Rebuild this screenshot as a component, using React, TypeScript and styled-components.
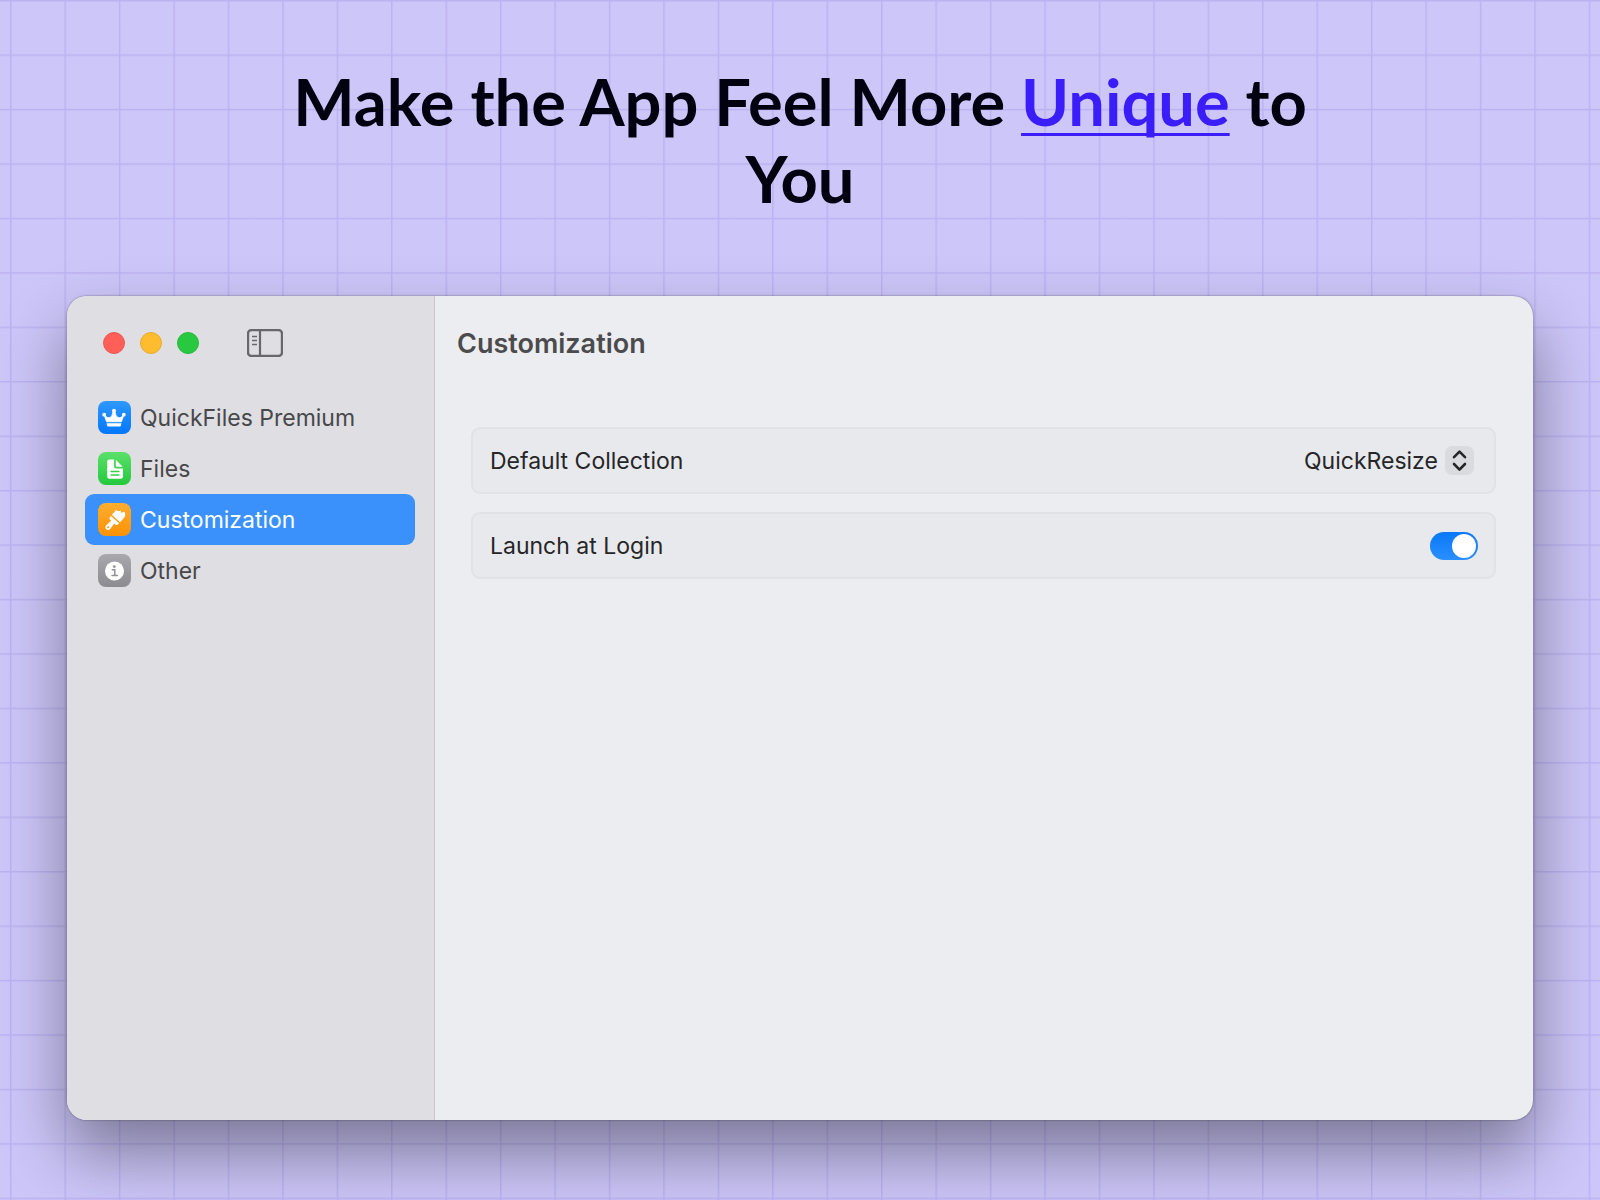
import React, { useState } from "react";
import styled, { createGlobalStyle, css } from "styled-components";

const GlobalStyle = createGlobalStyle`
  *, *::before, *::after { box-sizing: border-box; }
  body {
    margin: 0;
    font-family: Inter, "Liberation Sans", sans-serif;
  }
`;

const Page = styled.main`
  --cell: calc(100vw * 49 / 1440);
  display: flex;
  flex-direction: column;
  min-height: 100vh;
  padding: 63px 67px 80px;
  background-color: #cdc6f9;
  background-image:
    linear-gradient(to right, #bcb2f2 1px, transparent 2px),
    linear-gradient(to bottom, #bcb2f2 1px, transparent 2px);
  background-size: var(--cell) var(--cell);
  background-position: 10px 0;
`;

const Headline = styled.h1`
  width: 100%;
  max-width: 1100px;
  margin: 0 auto 79px;
  font-family: Lato, "Open Sans", sans-serif;
  font-size: 65px;
  font-weight: 700;
  line-height: 77px;
  text-align: center;
  color: #02010f;
`;

const Accent = styled.span`
  color: #3a1df9;
  text-decoration: underline;
  text-decoration-thickness: 3px;
  text-decoration-skip-ink: none;
  text-underline-offset: 7px;
`;

const Window = styled.section`
  display: flex;
  flex: 1;
  overflow: hidden;
  border-radius: 20px;
  background: #ecedf1;
  box-shadow:
    0 0 2px rgba(0, 0, 0, 0.5),
    0 33px 66px rgba(0, 0, 0, 0.4);
`;

const Sidebar = styled.aside`
  flex: none;
  width: 368px;
  padding: 0 19px 0 18px;
  border-right: 1px solid #c8c8cb;
  background: #dfdee3;
`;

const Toolbar = styled.div`
  display: flex;
  align-items: center;
  height: 94px;
  padding-left: 18px;
`;

const Lights = styled.div`
  display: flex;
  gap: 15px;
  margin-right: 48px;
`;

const Light = styled.button<{ $color: string; $edge: string }>`
  width: 22px;
  height: 22px;
  padding: 0;
  border: 1px solid ${(p) => p.$edge};
  border-radius: 50%;
  background: ${(p) => p.$color};
`;

const IconButton = styled.button`
  display: flex;
  padding: 0;
  border: 0;
  background: none;
  color: #68686b;
`;

const Nav = styled.nav`
  display: flex;
  flex-direction: column;
  padding-top: 2px;
`;

const NavItem = styled.a<{ $active: boolean }>`
  display: flex;
  align-items: center;
  gap: 9px;
  height: 51px;
  padding-left: 13px;
  border-radius: 9px;
  font-size: 23px;
  font-weight: 425;
  color: #48484a;
  text-decoration: none;
  ${(p) =>
    p.$active &&
    css`
      background: #3a91fc;
      color: #fff;
    `}
`;

const Tile = styled.span<{ $from: string; $to: string }>`
  display: grid;
  place-items: center;
  width: 33px;
  height: 33px;
  border-radius: 8px;
  background: linear-gradient(${(p) => p.$from}, ${(p) => p.$to});
`;

const Content = styled.div`
  flex: 1;
  min-width: 0;
`;

const Title = styled.h2`
  display: flex;
  align-items: center;
  height: 94px;
  margin: 0;
  padding-left: 22px;
  font-size: 27px;
  font-weight: 600;
  color: #4b4b4d;
`;

const Settings = styled.form`
  display: flex;
  flex-direction: column;
  gap: 18px;
  padding: 37px 37px 37px 36px;
`;

const Card = styled.div`
  display: flex;
  align-items: center;
  justify-content: space-between;
  height: 67px;
  padding: 0 16px 0 17px;
  border: 2px solid #e1e2e5;
  border-radius: 9px;
  background: #e8e9ec;
  font-size: 23px;
  font-weight: 425;
  color: #262628;
`;

const Picker = styled.div`
  position: relative;
  display: flex;
  align-items: center;
  margin-right: 4px;
`;

const Select = styled.select`
  appearance: none;
  height: 33px;
  padding: 0 36px 0 0;
  border: 0;
  background: none;
  font: inherit;
  color: inherit;
`;

const Stepper = styled.span`
  position: absolute;
  right: 0;
  display: grid;
  place-items: center;
  width: 29px;
  height: 29px;
  border-radius: 7px;
  background: #dadbde;
  pointer-events: none;
`;

const Switch = styled.input`
  appearance: none;
  display: flex;
  width: 48px;
  height: 28px;
  margin: 0;
  padding: 2px;
  border-radius: 14px;
  background: #c4c4c8;

  &::before {
    content: "";
    width: 24px;
    height: 24px;
    border-radius: 50%;
    background: #fff;
  }

  &:checked {
    justify-content: flex-end;
    background: linear-gradient(#0a78f8, #2a8fff);
  }
`;

const SidebarIcon = () => (
  <svg width="36" height="28" viewBox="0 0 36 28" fill="none" stroke="currentColor">
    <rect x="1" y="1" width="34" height="26" rx="3.5" strokeWidth="2.4" />
    <path d="M13 1v26" strokeWidth="2.2" />
    <path d="M5 7.5h5M5 11.5h5M5 15.5h5" strokeWidth="1.5" />
  </svg>
);

const CrownIcon = () => (
  <svg width="33" height="33" viewBox="0 0 33 33" fill="#fff">
    <path
      d="M6 13.8q3.800 4 6 2.800t3.200-6.400h1.600q1 5.200 3.200 6.400t6-2.800l-2.600 7H8.600z"
      stroke="#fff"
      strokeWidth="0.8"
      strokeLinejoin="round"
    />
    <circle cx="6.2" cy="13.7" r="1.900" />
    <circle cx="25.800" cy="13.7" r="1.900" />
    <circle cx="16" cy="9.700" r="2" />
    <path d="M8.600 22.200h14.800l-.4 2.200q-.2 1.100-1.300 1.100H10.300q-1.100 0-1.300-1.100z" />
  </svg>
);

const FileIcon = () => (
  <svg width="33" height="33" viewBox="0 0 33 33">
    <path d="M11.500 7.500H16v6.800q0 2.200 2.200 2.200H25v8q0 2.300-2.300 2.300h-11.200q-2.300 0-2.300-2.300V9.800q0-2.300 2.300-2.300z" fill="#fff" />
    <path d="M17.800 7.800v5.800q0 1.200 1.200 1.200h5.700z" fill="#fff" />
    <path d="M13 19.500h8M13 23h8" stroke="#35cf4b" strokeWidth="1.300" strokeLinecap="round" />
  </svg>
);

const BrushIcon = () => (
  <svg width="33" height="33" viewBox="0 0 33 33">
    <g transform="translate(-0.200 0.900) rotate(42 16.500 16.500)" fill="#fff">
      <path d="M11 14V7.200q2.600 1 3.600-2.700l1.600 2 2.200-3.200q3.600 1.400 3.600 5V14z" />
      <path d="M11 15.400h11v1.400q0 2-2 2h-1.500l.7 6.800a2.700 2.700 0 0 1-5.400 0l.7-6.800H13q-2 0-2-2z" />
      <circle cx="16.500" cy="25.600" r="1" fill="#ff9a14" />
    </g>
  </svg>
);

const InfoIcon = () => (
  <svg width="33" height="33" viewBox="0 0 33 33">
    <circle cx="16.500" cy="17" r="9.500" fill="#fff" />
    <circle cx="16.300" cy="12.600" r="1.400" fill="#929296" />
    <path d="M14.300 15.800h2.500v5.400M14 21.400h5.300" fill="none" stroke="#929296" strokeWidth="1.500" strokeLinecap="round" />
  </svg>
);

const ChevronsIcon = () => (
  <svg width="29" height="29" viewBox="0 0 29 29" fill="none" stroke="#262628" strokeWidth="2.600" strokeLinecap="round" strokeLinejoin="round">
    <path d="m9 11.200 5.500-5.600 5.500 5.600M9 18l5.500 5.600L20 18" />
  </svg>
);

const lights = [
  { label: "Close", color: "#ff5f57", edge: "#ea5850" },
  { label: "Minimize", color: "#febc2e", edge: "#e8ab2c" },
  { label: "Zoom", color: "#28c840", edge: "#27b83c" },
];

const sections = [
  { id: "premium", label: "QuickFiles Premium", from: "#2f98ff", to: "#0277ff", Icon: CrownIcon },
  { id: "files", label: "Files", from: "#5be06a", to: "#23c93c", Icon: FileIcon },
  { id: "customization", label: "Customization", from: "#ffae30", to: "#ff9204", Icon: BrushIcon },
  { id: "other", label: "Other", from: "#a9a9ad", to: "#8b8b90", Icon: InfoIcon },
];

export default function App() {
  const [active, setActive] = useState("customization");
  const [launch, setLaunch] = useState(true);

  return (
    <>
      <GlobalStyle />
      <Page>
        <Headline>
          Make the App Feel More <Accent>Unique</Accent> to You
        </Headline>
        <Window>
          <Sidebar>
            <Toolbar>
              <Lights>
                {lights.map((l) => (
                  <Light key={l.label} type="button" aria-label={l.label} $color={l.color} $edge={l.edge} />
                ))}
              </Lights>
              <IconButton type="button" aria-label="Toggle sidebar">
                <SidebarIcon />
              </IconButton>
            </Toolbar>
            <Nav>
              {sections.map(({ id, label, from, to, Icon }) => (
                <NavItem key={id} href={`#${id}`} $active={id === active} onClick={() => setActive(id)}>
                  <Tile $from={from} $to={to}>
                    <Icon />
                  </Tile>
                  {label}
                </NavItem>
              ))}
            </Nav>
          </Sidebar>
          <Content>
            <Title>Customization</Title>
            <Settings>
              <Card>
                <label htmlFor="collection">Default Collection</label>
                <Picker>
                  <Select id="collection">
                    <option>QuickResize</option>
                  </Select>
                  <Stepper>
                    <ChevronsIcon />
                  </Stepper>
                </Picker>
              </Card>
              <Card>
                <label htmlFor="launch">Launch at Login</label>
                <Switch id="launch" type="checkbox" checked={launch} onChange={(e) => setLaunch(e.target.checked)} />
              </Card>
            </Settings>
          </Content>
        </Window>
      </Page>
    </>
  );
}
